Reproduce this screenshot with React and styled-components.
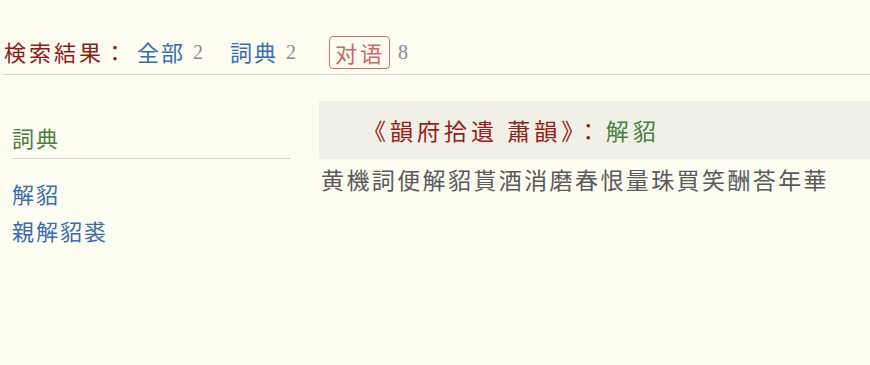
import React from "react";
import styled, { createGlobalStyle } from "styled-components";

const Global = createGlobalStyle`
  html, body { margin: 0; padding: 0; background: #fcfcf1; }
  body { font-family: "Liberation Serif", "Noto Sans CJK JP", serif; }
`;

const Page = styled.div`
  width: 870px;
  height: 365px;
  background: #fcfcf1;
  overflow: hidden;
`;

const Nav = styled.div`
  display: flex;
  align-items: center;
  margin: 34px 0 0 3px;
  padding: 0 0 6px 1px;
  border-bottom: 1px solid #d6d6d0;
  height: 34px;
`;

const NavLabel = styled.span`
  font-family: "Noto Sans CJK JP", sans-serif;
  font-size: 22px;
  letter-spacing: 3px;
  color: #8e1c1c;
  margin-right: 8px;
`;

const NavItem = styled.span`
  display: inline-flex;
  align-items: center;
  margin-right: ${(p) => p.$gap || 27}px;
`;

const NavLink = styled.span`
  font-family: "Noto Sans CJK JP", sans-serif;
  font-size: 22px;
  letter-spacing: 2px;
  color: ${(p) => (p.$active ? "#c96a68" : "#3a6cb3")};
  ${(p) =>
    p.$active &&
    `
    border: 1px solid #c87674;
    border-radius: 4px;
    padding: 0 4px 0 5px;
    line-height: 31px;
    letter-spacing: 3px;
    margin-top: 2px;
  `}
`;

const Count = styled.span`
  font-family: "Liberation Serif", serif;
  font-size: 20px;
  color: #8a8a8a;
  margin-left: ${(p) => p.$ml || 8}px;
  margin-top: 3px;
`;

const Main = styled.div`
  display: flex;
  align-items: flex-start;
  margin-top: 26px;
`;

const Side = styled.div`
  width: 279px;
  margin-left: 12px;
  margin-right: 28px;
  flex-shrink: 0;
`;

const SideHead = styled.div`
  font-family: "Noto Sans CJK JP", sans-serif;
  font-size: 22px;
  letter-spacing: 2px;
  color: #4b7e41;
  height: 58px;
  display: flex;
  align-items: flex-end;
  padding-bottom: 5px;
  box-sizing: border-box;
  border-bottom: 1px solid #d3d3cf;
`;

const SideList = styled.div`
  display: flex;
  flex-direction: column;
  padding-top: 16px;
`;

const SideLink = styled.div`
  font-family: "Noto Sans CJK JP", sans-serif;
  font-size: 22px;
  letter-spacing: 2px;
  color: #3a6cb3;
  line-height: 37px;
`;

const Content = styled.div`
  flex: 1;
`;

const Panel = styled.div`
  background: #f0f0e6;
  height: 58px;
  display: flex;
  align-items: center;
  padding-left: 44px;
  font-family: "Noto Sans CJK JP", sans-serif;
  font-size: 23px;
  letter-spacing: 4px;
`;

const Title = styled.span`
  color: #961d1d;
`;

const Word = styled.span`
  color: #4b7e41;
  margin-left: 2px;
`;

const Body = styled.div`
  font-family: "Noto Sans CJK JP", sans-serif;
  font-size: 23px;
  letter-spacing: 2.4px;
  color: #5a5a5a;
  padding-left: 2px;
  line-height: 41px;
`;

export default function App() {
  return (
    <Page>
      <Global />
      <Nav>
        <NavLabel>検索結果：</NavLabel>
        <NavItem>
          <NavLink>全部</NavLink>
          <Count>2</Count>
        </NavItem>
        <NavItem $gap={33}>
          <NavLink>詞典</NavLink>
          <Count>2</Count>
        </NavItem>
        <NavItem>
          <NavLink $active>对语</NavLink>
          <Count>8</Count>
        </NavItem>
      </Nav>
      <Main>
        <Side>
          <SideHead>詞典</SideHead>
          <SideList>
            <SideLink>解貂</SideLink>
            <SideLink>親解貂裘</SideLink>
          </SideList>
        </Side>
        <Content>
          <Panel>
            <Title>《韻府拾遺 蕭韻》：</Title>
            <Word>解貂</Word>
          </Panel>
          <Body>黄機詞便解貂貰酒消磨春恨量珠買笑酬荅年華</Body>
        </Content>
      </Main>
    </Page>
  );
}
